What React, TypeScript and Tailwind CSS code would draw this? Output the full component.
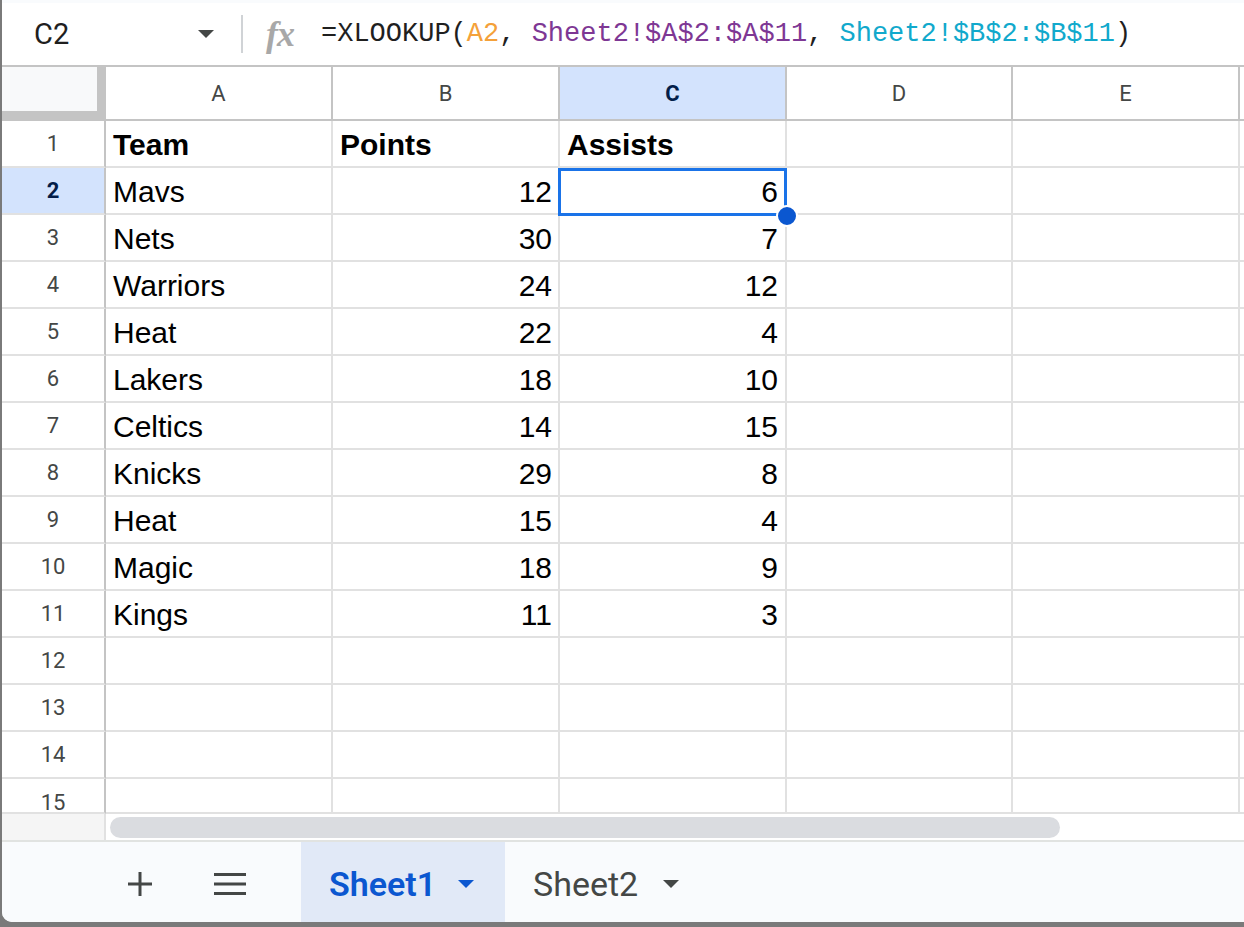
import React from "react";

const rows: [string, string, string][] = [
  ["Team", "Points", "Assists"],
  ["Mavs", "12", "6"],
  ["Nets", "30", "7"],
  ["Warriors", "24", "12"],
  ["Heat", "22", "4"],
  ["Lakers", "18", "10"],
  ["Celtics", "14", "15"],
  ["Knicks", "29", "8"],
  ["Heat", "15", "4"],
  ["Magic", "18", "9"],
  ["Kings", "11", "3"],
];

const cellFont = { fontFamily: '"Liberation Sans", Arial, sans-serif' };
const roboto = { fontFamily: 'Roboto, "Noto Sans", sans-serif' };

function Tri({ color, className }: { color: string; className?: string }) {
  return (
    <svg width="16" height="8" viewBox="0 0 16 8" className={className}>
      <polygon points="0,0 16,0 8,8" fill={color} />
    </svg>
  );
}

function GridRow({ n, data, h }: { n: number; data?: [string, string, string]; h: "full" | "cut" }) {
  const active = n === 2;
  const bold = n === 1;
  const rowH = h === "full" ? "h-[47px]" : "h-[35px]";
  const rowItems = h === "full" ? "items-center" : "items-start pt-[7px]";
  return (
    <div className={`flex ${rowH} shrink-0`}>
      <div
        className={`w-[104px] shrink-0 flex justify-center ${rowItems} border-r-2 border-r-[#c4c4c4] border-b-2 border-b-[#e1e1e1] text-[22px] ${
          active ? "bg-[#d3e3fd] text-[#041e49] font-bold" : "bg-white text-[#444746]"
        }`}
        style={roboto}
      >
        {n}
      </div>
      <div
        className={`w-[227px] shrink-0 flex items-center pt-[2px] pl-[7px] border-r-2 border-b-2 border-[#e1e1e1] text-[30px] text-black ${bold ? "font-bold" : ""}`}
        style={cellFont}
      >
        {data ? data[0] : ""}
      </div>
      <div
        className={`w-[227px] shrink-0 flex items-center pt-[2px] ${bold ? "justify-start pl-[7px] font-bold" : "justify-end pr-[6px]"} border-r-2 border-b-2 border-[#e1e1e1] text-[30px] text-black`}
        style={cellFont}
      >
        {data ? data[1] : ""}
      </div>
      <div
        className={`relative w-[227px] shrink-0 flex items-center pt-[2px] ${bold ? "justify-start pl-[7px] font-bold" : "justify-end pr-[7px]"} border-r-2 border-b-2 border-[#e1e1e1] text-[30px] text-black`}
        style={cellFont}
      >
        {data ? data[2] : ""}
        {active && (
          <>
            <div className="absolute left-[-2px] top-0 w-[229px] h-[48px] border-[3px] border-[#1a73e8] pointer-events-none" />
            <div className="absolute left-[216px] top-[37px] w-[22px] h-[22px] rounded-full bg-[#0b57d0] border-2 border-white z-10" />
          </>
        )}
      </div>
      <div className="w-[226px] shrink-0 border-r-2 border-b-2 border-[#e1e1e1]" />
      <div className="w-[227px] shrink-0 border-r-2 border-b-2 border-[#e1e1e1]" />
      <div className="flex-1 border-b-2 border-[#e1e1e1]" />
    </div>
  );
}

export default function App() {
  const headers: { l: string; w: string }[] = [
    { l: "A", w: "w-[227px]" },
    { l: "B", w: "w-[227px]" },
    { l: "C", w: "w-[227px]" },
    { l: "D", w: "w-[226px]" },
    { l: "E", w: "w-[227px]" },
  ];
  return (
    <div className="w-[1244px] h-[927px] bg-[#7a7a7a] overflow-hidden">
      <div className="ml-[2px] w-[1242px] h-[922px] bg-white rounded-bl-[10px] overflow-hidden flex flex-col">
        {/* top strip */}
        <div className="h-[3px] shrink-0 bg-[#f9fbfd]" />
        {/* formula bar */}
        <div className="h-[64px] shrink-0 flex items-center border-b-2 border-[#c4c4c4] bg-white">
          <div className="w-[239px] shrink-0 flex items-center pl-[32px] pr-[27px]">
            <span className="text-[29px] text-[#1f1f1f] leading-none" style={roboto}>
              C2
            </span>
            <div className="flex-1" />
            <Tri color="#444746" />
          </div>
          <div className="w-[2px] h-[38px] bg-[#d0d3d6] shrink-0" />
          <div className="w-[78px] shrink-0 flex items-center pl-[23px]">
            <span
              className="text-[36px] italic font-bold text-[#a8a8a8] leading-none tracking-[-1px]"
              style={{ fontFamily: '"Liberation Serif", "Times New Roman", serif' }}
            >
              fx
            </span>
          </div>
          <div
            className="text-[27px] leading-none whitespace-pre text-[#1f1f1f]"
            style={{ fontFamily: '"Liberation Mono", "Courier New", monospace' }}
          >
            <span>=XLOOKUP(</span>
            <span className="text-[#f4a13a]">A2</span>
            <span>, </span>
            <span className="text-[#7e3794]">Sheet2!$A$2:$A$11</span>
            <span>, </span>
            <span className="text-[#11a9cc]">Sheet2!$B$2:$B$11</span>
            <span>)</span>
          </div>
        </div>
        {/* header row */}
        <div className="flex h-[54px] shrink-0">
          <div className="w-[104px] shrink-0 bg-[#c4c4c4] flex flex-col">
            <div className="w-[95px] h-[44px] bg-[#f8f9fa]" />
          </div>
          {headers.map((h) => (
            <div
              key={h.l}
              className={`${h.w} shrink-0 flex items-center justify-center border-r-2 border-b-2 border-[#c4c4c4] text-[22px] ${
                h.l === "C" ? "bg-[#d3e3fd] text-[#041e49] font-bold" : "bg-white text-[#444746]"
              }`}
              style={roboto}
            >
              {h.l}
            </div>
          ))}
          <div className="flex-1 border-b-2 border-[#c4c4c4]" />
        </div>
        {/* grid */}
        {Array.from({ length: 14 }).map((_, i) => (
          <GridRow key={i} n={i + 1} data={rows[i]} h="full" />
        ))}
        <GridRow n={15} h="cut" />
        {/* scroll area */}
        <div className="h-[28px] shrink-0 flex border-b-2 border-[#e1e3e1]">
          <div className="w-[104px] shrink-0 bg-[#f5f5f5] border-r-2 border-[#e1e1e1]" />
          <div className="flex-1 flex items-center pl-[4px]">
            <div className="w-[950px] h-[21px] rounded-full bg-[#dadce0]" />
          </div>
        </div>
        {/* tab bar */}
        <div className="flex-1 flex items-stretch bg-[#f9fbfd]">
          <div className="w-[299px] shrink-0 flex items-center pt-[3px]">
            <div className="ml-[124px] w-[28px] h-[28px] flex items-center justify-center">
              <svg width="26" height="26" viewBox="0 0 26 26">
                <path d="M13 1v24M1 13h24" stroke="#444746" strokeWidth="3" fill="none" />
              </svg>
            </div>
            <div className="ml-[59px] w-[34px] flex items-center justify-center">
              <svg width="32" height="22" viewBox="0 0 32 22">
                <path d="M0 1.5h32M0 11h32M0 20.5h32" stroke="#444746" strokeWidth="3" fill="none" />
              </svg>
            </div>
          </div>
          <div className="w-[204px] shrink-0 flex items-center pl-[28px] pt-[3px] bg-[#e1e9f7]">
            <span className="text-[34px] font-semibold text-[#0b57d0] leading-none" style={roboto}>
              Sheet1
            </span>
            <Tri color="#0b57d0" className="ml-[22px]" />
          </div>
          <div className="w-[210px] shrink-0 flex items-center pl-[28px] pt-[3px]">
            <span className="text-[34px] text-[#444746] leading-none" style={roboto}>
              Sheet2
            </span>
            <Tri color="#444746" className="ml-[25px]" />
          </div>
        </div>
      </div>
    </div>
  );
}
